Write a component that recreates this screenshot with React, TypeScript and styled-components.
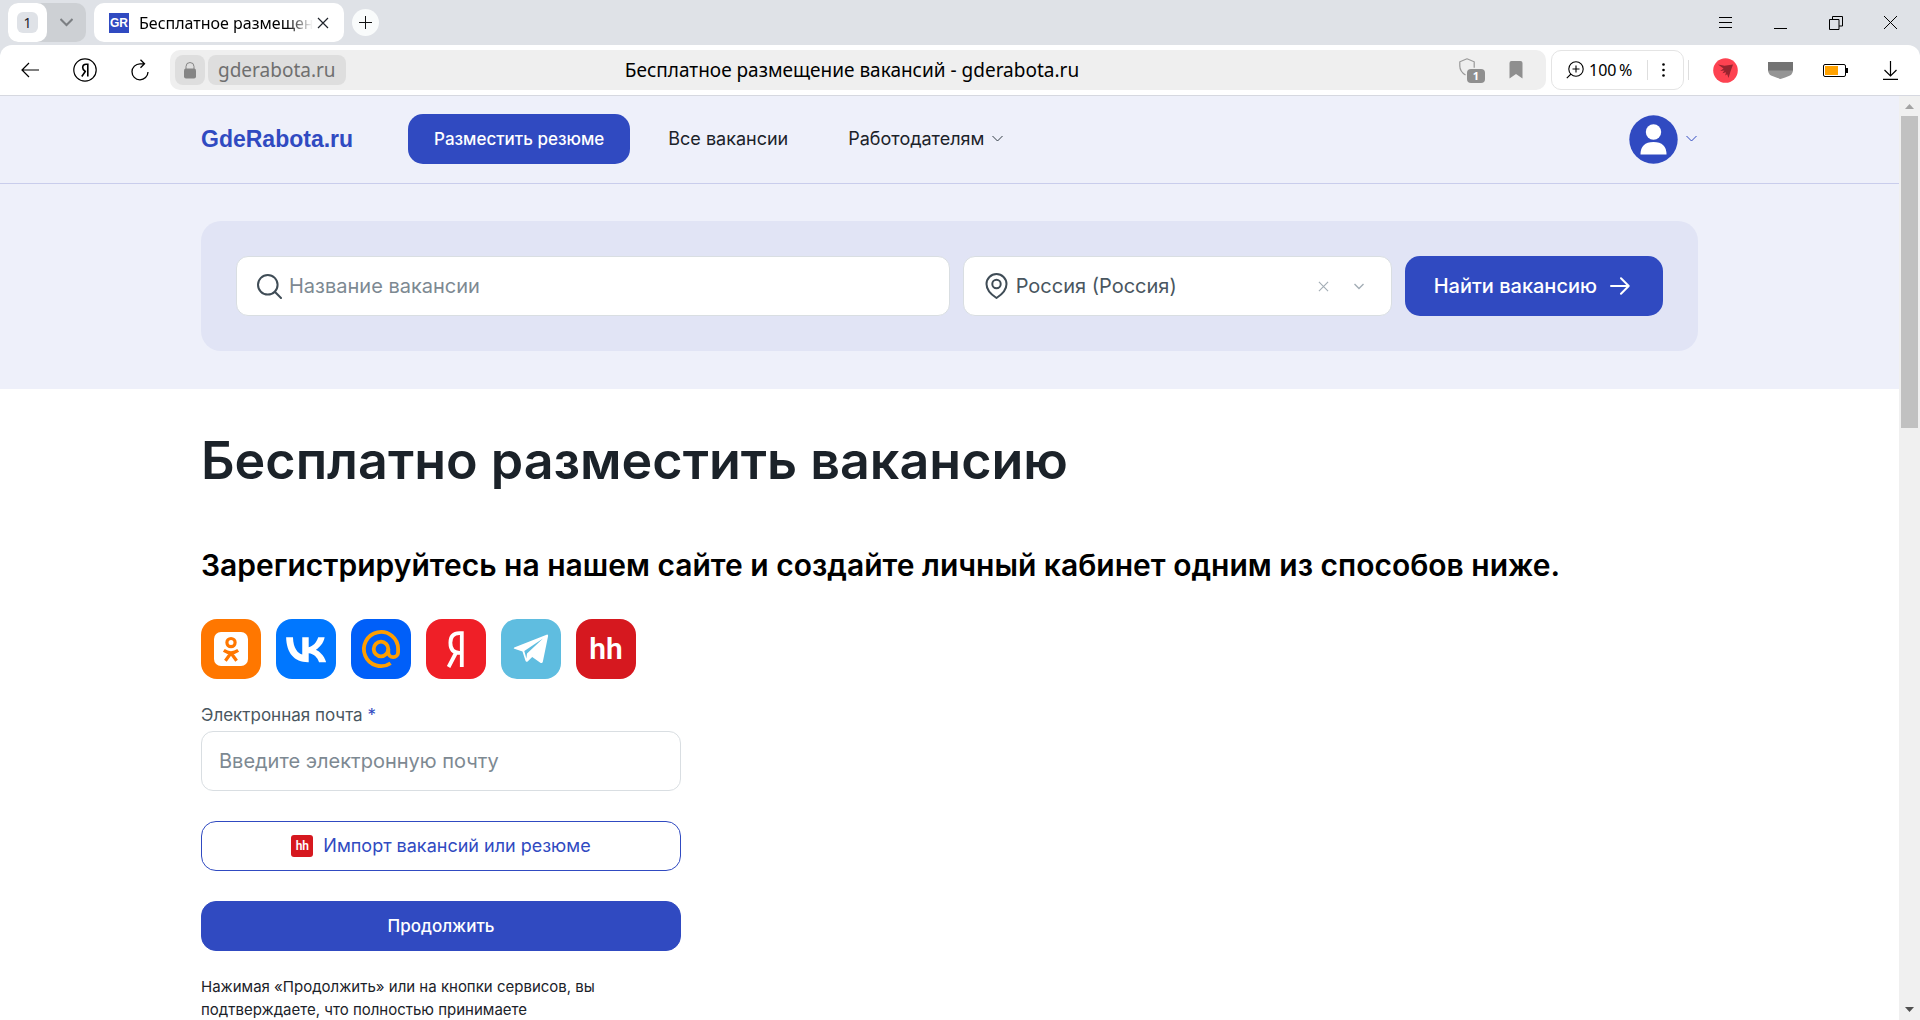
import React from "react";
import styled, { createGlobalStyle } from "styled-components";

const ui = `"Noto Sans", "Open Sans", sans-serif`;
const blue = "#304ac1";

const GlobalStyle = createGlobalStyle`
  *, *::before, *::after { box-sizing: border-box; }
  body { margin: 0; background: #fff; font-family: Inter, "Liberation Sans", sans-serif; color: #1b2229; }
  button, input, select { font: inherit; color: inherit; }
  button { padding: 0; border: 0; background: none; cursor: pointer; }
  a { color: inherit; text-decoration: none; }
  svg { display: block; flex: none; }
  h1, h2, p { margin: 0; }
`;

const Window = styled.div`
  display: flex;
  flex-direction: column;
  height: 100vh;
  overflow: hidden;
  background: #dfe2e7;
`;

/* Browser tab strip */
const TabStrip = styled.div`
  display: flex;
  align-items: center;
  height: 45px;
  padding: 0 2px 0 8px;
  font-family: ${ui};
`;
const TabGroup = styled.div`
  display: flex;
  height: 39px;
  margin-right: 8px;
  border-radius: 10px;
  background: #cdd0d4;
`;
const GroupButton = styled.button<{ $active?: boolean }>`
  display: grid;
  place-items: center;
  width: 39px;
  border-radius: 10px;
  background: ${(p) => (p.$active ? "#fff" : "transparent")};
`;
const TabCount = styled.span`
  display: grid;
  place-items: center;
  width: 21px;
  height: 21px;
  border-radius: 6px;
  background: #dfe2e7;
  font-size: 14px;
  line-height: 20px;
`;
const Tab = styled.div`
  display: flex;
  align-items: center;
  width: 250px;
  height: 39px;
  padding: 0 15px;
  border-radius: 10px;
  background: #fff;
`;
const Favicon = styled.span`
  width: 20px;
  height: 20px;
  margin-right: 10px;
  background: ${blue};
  color: #fff;
  font: bold 12px/20px "Liberation Sans", Arial, sans-serif;
  text-align: center;
`;
const TabTitle = styled.span`
  flex: 1;
  overflow: hidden;
  white-space: nowrap;
  font-size: 16px;
  line-height: 24px;
  color: #000;
  mask-image: linear-gradient(to right, #000 85%, transparent);
`;
const TabClose = styled.button`
  margin-left: 4px;
`;
const NewTab = styled.button`
  display: grid;
  place-items: center;
  width: 27px;
  height: 27px;
  margin-left: 8px;
  border-radius: 50%;
  background: #f9fbfb;
`;
const WindowButtons = styled.div`
  display: flex;
  margin-left: auto;
`;
const IconButton = styled.button`
  display: grid;
  place-items: center;
  width: 55px;
  height: 40px;
`;

/* Browser toolbar */
const Toolbar = styled.div`
  display: flex;
  align-items: center;
  height: 51px;
  padding: 0 2px;
  border-bottom: 1px solid #d6d8e0;
  border-radius: 12px 12px 0 0;
  background: #fff;
  font-family: ${ui};
`;
const AddressBar = styled.div`
  flex: 1;
  display: grid;
  grid-template-columns: 1fr auto 1fr;
  align-items: center;
  height: 40px;
  margin: 0 5px 0 3px;
  padding: 0 17px 0 5px;
  border-radius: 10px;
  background: #efefef;
`;
const AddressLeft = styled.div`
  display: flex;
  gap: 3px;
`;
const AddressChip = styled.button`
  display: grid;
  place-items: center;
  min-width: 30px;
  height: 30px;
  border-radius: 8px;
  background: #dedede;
`;
const Domain = styled(AddressChip)`
  padding: 0 10px;
  color: #6f6f6f;
  font-size: 19px;
  line-height: 30px;
`;
const PageTitle = styled.span`
  white-space: nowrap;
  color: #000;
  font-size: 19px;
  line-height: 30px;
`;
const AddressRight = styled.div`
  display: flex;
  justify-content: flex-end;
  align-items: center;
  gap: 18px;
`;
const Shield = styled.button`
  position: relative;
`;
const ShieldCount = styled.span`
  position: absolute;
  right: 0;
  bottom: 0;
  width: 18px;
  height: 14px;
  border-radius: 4px;
  background: #8f8f8f;
  color: #fff;
  font-size: 11px;
  font-weight: 700;
  line-height: 14px;
`;
const ZoomBox = styled.div`
  display: flex;
  align-items: center;
  justify-content: space-between;
  width: 133px;
  height: 40px;
  margin-right: 4px;
  padding: 0 18px 0 14px;
  border: 1px solid #e4e4e4;
  border-radius: 10px;
`;
const ZoomValue = styled.button`
  display: flex;
  align-items: center;
  gap: 5px;
  color: #000;
  font-size: 16px;
  line-height: 24px;
  white-space: nowrap;
`;
const Divider = styled.span`
  width: 1px;
  height: 20px;
  background: #dedede;
`;
const Extensions = styled.div`
  display: flex;
  margin-left: 9px;
`;

/* Page area */
const Viewport = styled.div`
  flex: 1;
  display: flex;
  min-height: 0;
  background: #fff;
`;
const Page = styled.div`
  flex: 1;
  min-width: 0;
  overflow: hidden;
`;
const Scrollbar = styled.div`
  display: flex;
  flex-direction: column;
  align-items: center;
  width: 21px;
  padding: 8px 0;
  background: #f0f0f0;
`;
const Thumb = styled.div`
  width: 17px;
  height: 312px;
  margin: 7px 0 auto;
  background: #c1c1c1;
`;
const Container = styled.div`
  width: 100%;
  max-width: 1497px;
  margin: 0 auto;
`;
const Header = styled.header`
  padding: 18px 0 19px;
  border-bottom: 1px solid #c9cdec;
  background: #eef0fa;
`;
const HeaderRow = styled(Container)`
  display: flex;
  align-items: center;
  font-size: 18px;
  line-height: 24px;
`;
const Logo = styled.a`
  margin-right: 55px;
  color: ${blue};
  font: bold 23px/28px "Liberation Sans", Arial, sans-serif;
`;
const Nav = styled.nav`
  display: flex;
  align-items: center;
`;
const PrimaryLink = styled.a`
  margin-right: 38px;
  padding: 13px 26px;
  border-radius: 15px;
  background: ${blue};
  color: #fff;
  font-size: 17px;
  font-weight: 500;
`;
const NavLink = styled.a`
  margin-right: 60px;
`;
const NavButton = styled.button`
  display: flex;
  align-items: center;
  gap: 8px;
`;
const UserButton = styled.button`
  display: flex;
  align-items: center;
  gap: 8px;
  margin-left: auto;
  padding-right: 1px;
`;
const Hero = styled.section`
  padding: 37px 0 38px;
  background: #eef0fa;
`;
const SearchForm = styled.form`
  display: grid;
  grid-template-columns: minmax(0, 1fr) 429px auto;
  gap: 13px;
  width: 100%;
  max-width: 1497px;
  margin: 0 auto;
  padding: 35px;
  border-radius: 20px;
  background: #e1e4f5;
  font-size: 20px;
`;
const Field = styled.div`
  display: flex;
  align-items: center;
  gap: 7px;
  height: 60px;
  padding: 0 20px;
  border: 1px solid #d9dee2;
  border-radius: 12px;
  background: #fff;
  color: #495660;
`;
const TextInput = styled.input`
  flex: 1;
  min-width: 0;
  padding: 0;
  border: 0;
  outline: 0;
  background: none;
  line-height: 28px;
  &::placeholder { color: #7d8992; opacity: 1; }
`;
const CitySelect = styled.select`
  flex: 1;
  min-width: 0;
  padding: 0;
  border: 0;
  outline: 0;
  appearance: none;
  background: none;
  line-height: 28px;
`;
const CityActions = styled.div`
  display: flex;
  align-items: center;
  gap: 25px;
  padding-right: 7px;
`;
const FindButton = styled.button`
  display: flex;
  align-items: center;
  gap: 13px;
  padding: 0 33px 0 29px;
  border-radius: 15px;
  background: ${blue};
  color: #fff;
  font-weight: 500;
`;

const Main = styled.main`
  width: 100%;
  max-width: 1497px;
  margin: 0 auto;
  padding-top: 40px;
`;
const Title = styled.h1`
  margin-bottom: 54px;
  font-size: 52px;
  font-weight: 600;
  line-height: 64px;
`;
const Subtitle = styled.h2`
  margin-bottom: 36px;
  color: #000;
  font-size: 30px;
  font-weight: 600;
  line-height: 36px;
`;
const Socials = styled.div`
  display: flex;
  gap: 15px;
  margin-bottom: 24px;
`;
const SocialButton = styled.button<{ $color: string }>`
  display: grid;
  place-items: center;
  width: 60px;
  height: 60px;
  border-radius: 16px;
  background: ${(p) => p.$color};
  color: #fff;
`;
const HhMark = styled.span<{ $size: number }>`
  color: #fff;
  font: 600 ${(p) => p.$size}px/1 Roboto, sans-serif;
`;
const SignUp = styled.form`
  display: flex;
  flex-direction: column;
  max-width: 480px;
  font-size: 18px;
  line-height: 24px;
`;
const Label = styled.label`
  margin-bottom: 4px;
  color: #495660;
  font-size: 17px;
  span { color: ${blue}; }
`;
const EmailInput = styled(TextInput)`
  flex: none;
  height: 60px;
  padding: 0 17px;
  border: 1px solid #d9dee2;
  border-radius: 12px;
  font-size: 20px;
`;
const ActionButton = styled.button<{ $outline?: boolean }>`
  display: flex;
  align-items: center;
  justify-content: center;
  gap: 10px;
  height: 50px;
  margin-top: 30px;
  border: 1px solid ${blue};
  border-radius: 15px;
  background: ${(p) => (p.$outline ? "#fff" : blue)};
  color: ${(p) => (p.$outline ? blue : "#fff")};
  font-size: ${(p) => (p.$outline ? 18 : 17)}px;
  font-weight: ${(p) => (p.$outline ? 400 : 500)};
`;
const HhBadge = styled.span`
  display: grid;
  place-items: center;
  width: 22px;
  height: 22px;
  border-radius: 3px;
  background: #d6181f;
`;
const Terms = styled.p`
  max-width: 410px;
  margin-top: 24px;
  font-size: 15px;
  line-height: 23px;
`;

const Chevron = ({ w, color, sw = 1 }: { w: number; color: string; sw?: number }) => (
  <svg width={w} height={w / 2 + 2} viewBox={`0 0 ${w} ${w / 2 + 2}`} fill="none" stroke={color} strokeWidth={sw} aria-hidden="true">
    <path d={`M.5 1l${w / 2 - 0.5} ${w / 2 - 0.5}l${w / 2 - 0.5}-${w / 2 - 0.5}`} />
  </svg>
);
const Cross = ({ size, color }: { size: number; color: string }) => (
  <svg width={size} height={size} viewBox="0 0 12 12" stroke={color} strokeWidth="1.2" aria-hidden="true">
    <path d="M1 1l10 10M11 1L1 11" />
  </svg>
);

const OkLogo = () => (
  <svg width="60" height="60" viewBox="0 0 60 60" fill="none" aria-hidden="true">
    <rect x="13" y="13" width="34" height="34" rx="7" fill="#fff" />
    <g stroke="#ff7700" strokeWidth="3.2">
      <circle cx="30" cy="23.6" r="4.1" />
      <path d="M22.8 31.4q7.2 4.9 14.4 0M30 34l-5.6 7.8M30 34l5.6 7.8" />
    </g>
  </svg>
);
const VkLogo = () => (
  <svg width="60" height="60" viewBox="0 0 48 48" fill="#fff" aria-hidden="true">
    <path d="M25.54 34.58c-10.94 0-17.18-7.5-17.44-19.98h5.48c.18 9.16 4.22 13.04 7.42 13.84V14.6h5.16v7.9c3.16-.34 6.48-3.94 7.6-7.9h5.16c-.86 4.88-4.46 8.48-7.02 9.96 2.56 1.2 6.66 4.34 8.22 10.02h-5.68c-1.22-3.8-4.26-6.74-8.28-7.14v7.14h-.62z" />
  </svg>
);
const MailLogo = () => (
  <svg width="60" height="60" viewBox="0 0 60 60" fill="none" stroke="#ff9e00" strokeWidth="3.8" aria-hidden="true">
    <circle cx="30" cy="30" r="7.3" />
    <path d="M37.3 30v3.2a4.9 4.9 0 0 0 9.8 0V30A17.1 17.1 0 1 0 39.6 44.2" />
  </svg>
);
const YandexLogo = () => (
  <svg width="60" height="60" viewBox="0 0 60 60" fill="none" stroke="#fff" strokeWidth="3.8" aria-hidden="true">
    <path d="M35.8 48V14.1H33.4c-5 0-9 2.6-9 9.7 0 6.6 3.4 10 9 10h2.4M30.4 33L22.6 48" />
  </svg>
);
const TelegramLogo = () => (
  <svg width="60" height="60" viewBox="0 0 60 60" fill="#fff" aria-hidden="true">
    <path d="M13.2 28.4L45.6 15.7q1.8-.5 1.5 1.4L41.8 43q-.6 1.6-2.1.9L31.2 38l-4.3 4.3q-1.8 1.3-2.5-.7l-2.9-9.2-8.2-2.6q-1.2-.7-.1-1.4zM23.3 32l2.1 7.6.6-5.1L42 19.6z" fillRule="evenodd" />
  </svg>
);

export default function App() {
  return (
    <Window>
      <GlobalStyle />
      <TabStrip>
        <TabGroup>
          <GroupButton $active aria-label="Группа вкладок"><TabCount>1</TabCount></GroupButton>
          <GroupButton aria-label="Список групп"><Chevron w={13} color="#7c7f83" sw={2} /></GroupButton>
        </TabGroup>
        <Tab>
          <Favicon>GR</Favicon>
          <TabTitle>Бесплатное размещен</TabTitle>
          <TabClose aria-label="Закрыть вкладку"><Cross size={12} color="#20242c" /></TabClose>
        </Tab>
        <NewTab aria-label="Новая вкладка">
          <svg width="13" height="13" viewBox="0 0 13 13" stroke="#111" strokeWidth="1"><path d="M0 6.5h13M6.5 0v13" /></svg>
        </NewTab>
        <WindowButtons>
          <IconButton aria-label="Меню">
            <svg width="13" height="13" viewBox="0 0 13 13" stroke="#000"><path d="M0 1.5h13M0 6.5h13M0 11.5h13" /></svg>
          </IconButton>
          <IconButton aria-label="Свернуть">
            <svg width="13" height="13" viewBox="0 0 13 13" stroke="#000"><path d="M0 12.5h13" /></svg>
          </IconButton>
          <IconButton aria-label="Восстановить">
            <svg width="14" height="14" viewBox="0 0 14 14" fill="none" stroke="#000"><path d="M.5 3.5h9.5v10H.5zM3.5 3.5v-3h10v9.5H10" /></svg>
          </IconButton>
          <IconButton aria-label="Закрыть">
            <svg width="13" height="13" viewBox="0 0 13 13" stroke="#000"><path d="M0 0l13 13M13 0L0 13" /></svg>
          </IconButton>
        </WindowButtons>
      </TabStrip>

      <Toolbar>
        <IconButton aria-label="Назад">
          <svg width="18" height="16" viewBox="0 0 18 16" fill="none" stroke="#000" strokeWidth="1.2"><path d="M18 8H1M8 1L1 8l7 7" /></svg>
        </IconButton>
        <IconButton aria-label="Яндекс">
          <svg width="24" height="24" viewBox="0 0 24 24" fill="none" stroke="#000" strokeWidth="1.2">
            <circle cx="12" cy="12" r="11.2" />
            <path d="M14.8 18.5V6.2h-1.7c-2.2 0-3.4 1.4-3.4 3.3 0 1.7.8 2.6 2.1 3.5l1.1.7M12.4 13.3L8.8 18.5" strokeWidth="1.6" />
          </svg>
        </IconButton>
        <IconButton aria-label="Обновить">
          <svg width="20" height="22" viewBox="0 0 20 22" fill="none" stroke="#000" strokeWidth="1.3"><path d="M18 13a8 8 0 1 1-8-8.2h4M10.5.8l4 4-4 4" /></svg>
        </IconButton>
        <AddressBar>
          <AddressLeft>
            <AddressChip aria-label="Защищённое соединение">
              <svg width="12" height="17" viewBox="0 0 12 17"><rect y="6.5" width="12" height="10" rx="2" fill="#858585" /><path d="M2 7V4.5a4 4 0 0 1 8 0V7" fill="none" stroke="#858585" /></svg>
            </AddressChip>
            <Domain>gderabota.ru</Domain>
          </AddressLeft>
          <PageTitle>Бесплатное размещение вакансий - gderabota.ru</PageTitle>
          <AddressRight>
            <Shield aria-label="Защита">
              <svg width="26" height="25" viewBox="0 0 26 25" fill="none" stroke="#999" strokeWidth="1.2"><path d="M8 .8l7.2 3v6M6.5 17C2.5 14.5 .8 12 .8 8V3.8L8 .8" /></svg>
              <ShieldCount>1</ShieldCount>
            </Shield>
            <button aria-label="Закладка">
              <svg width="26" height="18" viewBox="0 0 26 18" fill="#8f8f8f"><path d="M8.5 0h9a2 2 0 0 1 2 2v15.500L13 13l-6.500 4.500V2a2 2 0 0 1 2-2z" /></svg>
            </button>
          </AddressRight>
        </AddressBar>
        <ZoomBox>
          <ZoomValue aria-label="Масштаб 100 %">
            <svg width="18" height="18" viewBox="0 0 18 18" fill="none" stroke="#000" strokeWidth="1.1"><circle cx="10" cy="8" r="7.2" /><path d="M5 13L.8 17.2M10 4.500v7M6.500 8h7" /></svg>
            <span>100&#8239;%</span>
          </ZoomValue>
          <Divider />
          <button aria-label="Действия">
            <svg width="3" height="14" viewBox="0 0 3 14" fill="#000"><circle cx="1.5" cy="1.5" r="1.3" /><circle cx="1.5" cy="7" r="1.3" /><circle cx="1.5" cy="12.5" r="1.3" /></svg>
          </button>
        </ZoomBox>
        <Divider />
        <Extensions>
          <IconButton aria-label="Расширение">
            <svg width="25" height="25" viewBox="0 0 25 25"><circle cx="12.5" cy="12.5" r="12.3" fill="#fd4251" /><path d="M5 6.500l6.500 1.300L20 6.500l-2.500 7L15.500 20l-1.300-3.700-2 1.200.8-3.300-3.600 1 2-2.700-4.200.5 3.300-2.500z" fill="#97242f" /></svg>
          </IconButton>
          <IconButton aria-label="Карман">
            <svg width="25" height="17" viewBox="0 0 25 17"><path d="M0 0h25v7.500q0 4-3 6-5 2-9.500 3.500Q8 15.500 3 13.500q-3-2-3-6z" fill="#959595" /><path d="M0 0h25v8.500H0z" fill="#737373" /></svg>
          </IconButton>
          <IconButton aria-label="Батарея">
            <svg width="25" height="13" viewBox="0 0 25 13"><rect x=".5" y=".5" width="22" height="12" rx="1.5" fill="none" stroke="#000" /><rect x="2" y="2" width="13" height="9" fill="#ffa200" /><path d="M23 4h2v5h-2z" /></svg>
          </IconButton>
          <IconButton aria-label="Загрузки">
            <svg width="15" height="19" viewBox="0 0 15 19" fill="none" stroke="#000" strokeWidth="1.2"><path d="M7.500 0v15M1.500 9l6 6 6-6M0 18.400h15" /></svg>
          </IconButton>
        </Extensions>
      </Toolbar>

      <Viewport>
        <Page>
          <Header>
            <HeaderRow>
              <Logo href="#">GdeRabota.ru</Logo>
              <Nav>
                <PrimaryLink href="#">Разместить резюме</PrimaryLink>
                <NavLink href="#">Все вакансии</NavLink>
                <NavButton>Работодателям <Chevron w={11} color="#333c45" /></NavButton>
              </Nav>
              <UserButton aria-label="Профиль">
                <svg width="49" height="49" viewBox="0 0 49 49"><circle cx="24.5" cy="24.5" r="24.2" fill={blue} /><circle cx="24.5" cy="17" r="7.7" fill="#fff" /><path d="M11.500 39.500q0-12.500 13-12.500t13 12.500z" fill="#fff" /></svg>
                <Chevron w={11} color={blue} />
              </UserButton>
            </HeaderRow>
          </Header>
          <Hero>
            <SearchForm>
              <Field>
                <svg width="25" height="25" viewBox="0 0 25 25" fill="none" stroke="#3f4c56" strokeWidth="2"><circle cx="10.8" cy="10.8" r="9.8" /><path d="M17.800 17.800l6.200 6.200" strokeLinecap="round" /></svg>
                <TextInput aria-label="Название вакансии" placeholder="Название вакансии" />
              </Field>
              <Field>
                <svg width="25" height="26" viewBox="0 0 25 26" fill="none" stroke="#3f4c56" strokeWidth="2" strokeLinejoin="round"><path d="M12.500 25C5.500 20.500 2.500 15.500 2.500 11a10 10 0 0 1 20 0c0 4.500-3 9.500-10 14z" /><circle cx="12.5" cy="11" r="4.2" /></svg>
                <CitySelect aria-label="Город"><option>Россия (Россия)</option></CitySelect>
                <CityActions>
                  <button type="button" aria-label="Очистить"><Cross size={11} color="#a3adb5" /></button>
                  <Chevron w={10} color="#a3adb5" sw={1.4} />
                </CityActions>
              </Field>
              <FindButton type="button">
                Найти вакансию
                <svg width="20" height="18" viewBox="0 0 20 18" fill="none" stroke="#fff" strokeWidth="2" strokeLinecap="round" strokeLinejoin="round"><path d="M1 9h17.500M11 1.200L18.700 9 11 16.800" /></svg>
              </FindButton>
            </SearchForm>
          </Hero>
          <Main>
            <Title>Бесплатно разместить вакансию</Title>
            <Subtitle>Зарегистрируйтесь на нашем сайте и создайте личный кабинет одним из способов ниже.</Subtitle>
            <Socials>
              <SocialButton $color="#ff7700" aria-label="Одноклассники"><OkLogo /></SocialButton>
              <SocialButton $color="#0077ff" aria-label="ВКонтакте"><VkLogo /></SocialButton>
              <SocialButton $color="#005ff9" aria-label="Mail.ru"><MailLogo /></SocialButton>
              <SocialButton $color="#ef1f27" aria-label="Яндекс"><YandexLogo /></SocialButton>
              <SocialButton $color="#5fbde0" aria-label="Telegram"><TelegramLogo /></SocialButton>
              <SocialButton $color="#d6181f" aria-label="HeadHunter"><HhMark $size={30}>hh</HhMark></SocialButton>
            </Socials>
            <SignUp>
              <Label htmlFor="email">Электронная почта <span>*</span></Label>
              <EmailInput id="email" type="email" placeholder="Введите электронную почту" />
              <ActionButton type="button" $outline>
                <HhBadge><HhMark $size={12}>hh</HhMark></HhBadge>
                Импорт вакансий или резюме
              </ActionButton>
              <ActionButton type="button">Продолжить</ActionButton>
              <Terms>Нажимая «Продолжить» или на кнопки сервисов, вы подтверждаете, что полностью принимаете</Terms>
            </SignUp>
          </Main>
        </Page>
        <Scrollbar aria-hidden="true">
          <svg width="9" height="5" viewBox="0 0 9 5" fill="#a3a3a3"><path d="M0 5l4.500-5L9 5z" /></svg>
          <Thumb />
          <svg width="9" height="5" viewBox="0 0 9 5" fill="#505050"><path d="M0 0l4.500 5L9 0z" /></svg>
        </Scrollbar>
      </Viewport>
    </Window>
  );
}
